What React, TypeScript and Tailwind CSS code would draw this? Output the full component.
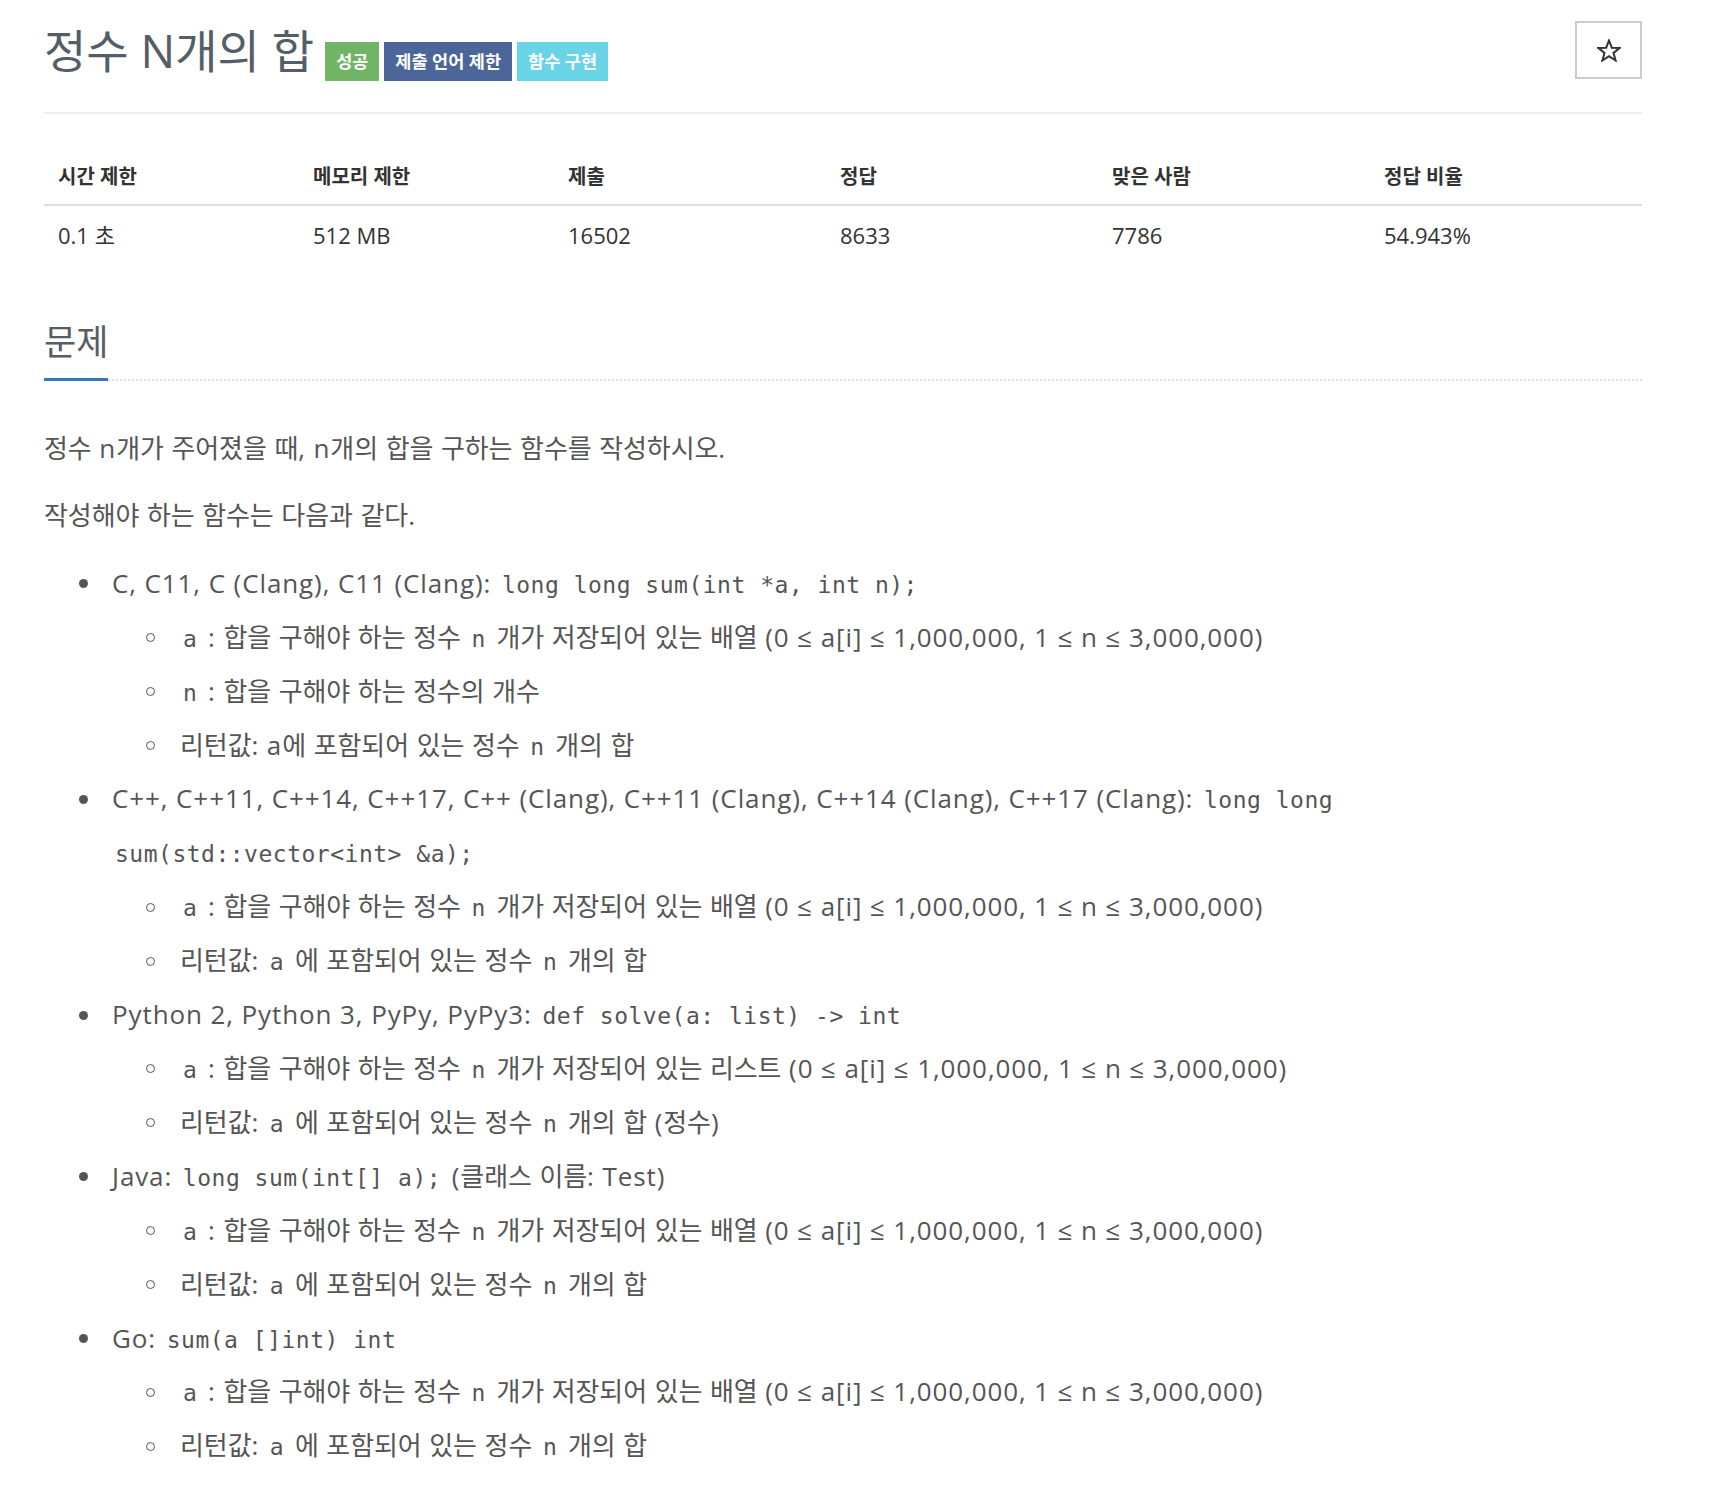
import React from "react";

// Hangul runs drop the extra tracking, so Korean and Latin advances match the reference
const HANGUL = /([\u3131-\u318E\uAC00-\uD7A3]+)/;

type Part = string | { code: string };

function Text({ parts }: { parts: Part[] }) {
  return (
    <>
      {parts.map((p, i) =>
        typeof p === "string" ? (
          p.split(HANGUL).map((run, j) =>
            j % 2 ? (
              <span key={`${i}-${j}`} className="tracking-[-0.1px]">
                {run}
              </span>
            ) : (
              <React.Fragment key={`${i}-${j}`}>{run}</React.Fragment>
            )
          )
        ) : (
          <Code key={i}>{p.code}</Code>
        )
      )}
    </>
  );
}

function Code({ children }: { children: React.ReactNode }) {
  return (
    <code className="px-[3px] font-['DejaVu_Sans_Mono',monospace] text-[23px] leading-none tracking-[0.5px] text-[#555]">
      {children}
    </code>
  );
}

function Dot() {
  return (
    <span className="flex h-[53.9px] w-[68px] shrink-0 items-center">
      <span className="ml-[34.5px] h-[9px] w-[9px] rounded-full bg-[#555]" />
    </span>
  );
}

function Circle() {
  return (
    <span className="flex h-[53.9px] w-[68px] shrink-0 items-center">
      <span className="ml-[34px] h-[9px] w-[9px] rounded-full border-[1.5px] border-[#555]" />
    </span>
  );
}

const RANGE = " (0 ≤ a[i] ≤ 1,000,000, 1 ≤ n ≤ 3,000,000)";
const arrayLine = (kind = "배열"): Part[] => [
  { code: "a" },
  " : 합을 구해야 하는 정수 ",
  { code: "n" },
  ` 개가 저장되어 있는 ${kind}${RANGE}`,
];
const returnLine = (tail = ""): Part[] => [
  "리턴값: ",
  { code: "a" },
  " 에 포함되어 있는 정수 ",
  { code: "n" },
  ` 개의 합${tail}`,
];

const langs: { head: Part[][]; subs: Part[][] }[] = [
  {
    head: [["C, C11, C (Clang), C11 (Clang): ", { code: "long long sum(int *a, int n);" }]],
    subs: [
      arrayLine(),
      [{ code: "n" }, " : 합을 구해야 하는 정수의 개수"],
      ["리턴값: a에 포함되어 있는 정수 ", { code: "n" }, " 개의 합"],
    ],
  },
  {
    head: [
      [
        "C++, C++11, C++14, C++17, C++ (Clang), C++11 (Clang), C++14 (Clang), C++17 (Clang): ",
        { code: "long long" },
      ],
      [{ code: "sum(std::vector<int> &a);" }],
    ],
    subs: [arrayLine(), returnLine()],
  },
  {
    head: [["Python 2, Python 3, PyPy, PyPy3: ", { code: "def solve(a: list) -> int" }]],
    subs: [arrayLine("리스트"), returnLine(" (정수)")],
  },
  {
    head: [["Java: ", { code: "long sum(int[] a);" }, " (클래스 이름: Test)"]],
    subs: [arrayLine(), returnLine()],
  },
  {
    head: [["Go: ", { code: "sum(a []int) int" }]],
    subs: [arrayLine(), returnLine()],
  },
];

const stats = [
  { head: "시간 제한", value: "0.1 초", w: "w-[255px]" },
  { head: "메모리 제한", value: "512 MB", w: "w-[255px]" },
  { head: "제출", value: "16502", w: "w-[272px]" },
  { head: "정답", value: "8633", w: "w-[272px]" },
  { head: "맞은 사람", value: "7786", w: "w-[272px]" },
  { head: "정답 비율", value: "54.943%", w: "w-[272px]" },
];

export default function App() {
  return (
    <div className="min-h-[1498px] bg-white font-['Open_Sans','Noto_Sans_CJK_KR',sans-serif] text-[#555]">
      <div className="ml-[44px] w-[1598px]">
        {/* Title row */}
        <div className="flex items-start justify-between border-b-2 border-[#eee] pt-[21px] pb-[31px]">
          <div className="flex items-start">
            <h1 className="text-[46px] leading-[58px] font-normal text-[#555d66]">정수 N개의 합</h1>
            <div className="ml-[11px] mt-[21px] flex gap-[5px] text-[17.5px] font-bold text-white">
              <span className="flex h-[39px] items-center bg-[#72b465] px-[11px]">성공</span>
              <span className="flex h-[39px] items-center bg-[#4c6699] px-[11px]">제출 언어 제한</span>
              <span className="flex h-[39px] items-center bg-[#69d4e5] px-[11px]">함수 구현</span>
            </div>
          </div>
          <button className="flex h-[58px] w-[67px] items-center justify-center border-2 border-[#ccc] bg-white">
            <svg width="24" height="23" viewBox="0 0 24 23" fill="none" stroke="#333" strokeWidth="2">
              <polygon points="12,1.5 14.8,8.7 22.6,9 16.5,13.9 18.6,21.5 12,17.2 5.4,21.5 7.5,13.9 1.4,9 9.2,8.7" />
            </svg>
          </button>
        </div>

        {/* Stats table */}
        <table className="mt-[36px] w-full table-fixed border-collapse text-[#333]">
          <thead>
            <tr className="border-b-2 border-[#ddd]">
              {stats.map((s) => (
                <th
                  key={s.head}
                  className={`${s.w} pl-[14px] pt-[15px] pb-[15px] text-left text-[20px] leading-[24px] font-bold`}
                >
                  {s.head}
                </th>
              ))}
            </tr>
          </thead>
          <tbody>
            <tr>
              {stats.map((s) => (
                <td key={s.head} className="pl-[14px] pt-[17px] pb-[17px] text-[22px] leading-[24px]">
                  {s.value}
                </td>
              ))}
            </tr>
          </tbody>
        </table>

        {/* Problem section */}
        <div className="mt-[58px] border-b-2 border-dotted border-[#ddd]">
          <span className="-mb-[2px] inline-block border-b-[3px] border-[#337ab7] pb-[16px] text-[35px] leading-[40px] text-[#555d66]">
            문제
          </span>
        </div>

        <div className="text-[26px] leading-[53.9px] tracking-[0.9px]">
          <p className="mt-[41px]">
            <Text parts={["정수 n개가 주어졌을 때, n개의 합을 구하는 함수를 작성하시오."]} />
          </p>
          <p className="mt-[13px]">
            <Text parts={["작성해야 하는 함수는 다음과 같다."]} />
          </p>

          <ul className="mt-[14px]">
            {langs.map((lang, i) => (
              <li key={i} className="flex">
                <Dot />
                <div className="flex-1">
                  <div>
                    {lang.head.map((line, j) => (
                      <React.Fragment key={j}>
                        {j > 0 && <br />}
                        <Text parts={line} />
                      </React.Fragment>
                    ))}
                  </div>
                  <ul>
                    {lang.subs.map((sub, j) => (
                      <li key={j} className="flex">
                        <Circle />
                        <div className="flex-1">
                          <Text parts={sub} />
                        </div>
                      </li>
                    ))}
                  </ul>
                </div>
              </li>
            ))}
          </ul>
        </div>
      </div>
    </div>
  );
}
